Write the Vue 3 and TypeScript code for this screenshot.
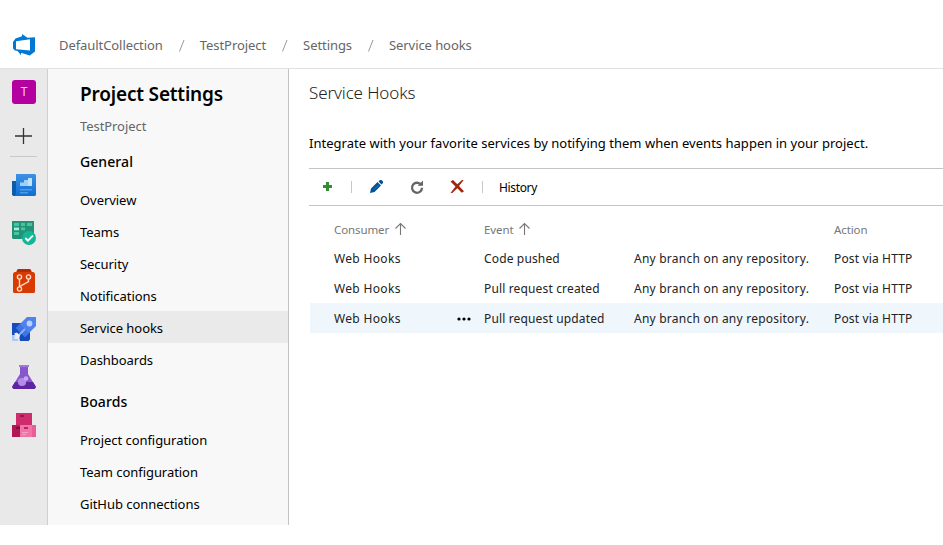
<script setup lang="ts">
interface Subscription {
  consumer: string
  event: string
  detail: string
  action: string
  selected?: boolean
}

const crumbs: string[] = ['DefaultCollection', 'TestProject', 'Settings', 'Service hooks']

const groups: { title: string; items: string[] }[] = [
  {
    title: 'General',
    items: ['Overview', 'Teams', 'Security', 'Notifications', 'Service hooks', 'Dashboards'],
  },
  {
    title: 'Boards',
    items: ['Project configuration', 'Team configuration', 'GitHub connections'],
  },
]
const active = 'Service hooks'

const rows: Subscription[] = [
  { consumer: 'Web Hooks', event: 'Code pushed', detail: 'Any branch on any repository.', action: 'Post via HTTP' },
  { consumer: 'Web Hooks', event: 'Pull request created', detail: 'Any branch on any repository.', action: 'Post via HTTP' },
  { consumer: 'Web Hooks', event: 'Pull request updated', detail: 'Any branch on any repository.', action: 'Post via HTTP', selected: true },
]
</script>

<template>
  <div class="page">
    <header class="top">
      <svg class="logo" width="24" height="24" viewBox="0 0 24 24">
        <path fill="#0078d4" fill-rule="evenodd" d="M1 9 3.500 5.600 10 3.300V1l5.400 3.800L23 4.300v14.200L17.800 22.400 9 19.700v2.600L5.600 18 3 17.400 1 15.600ZM4 8.200v8.100l14 1.200V6.200Z" />
      </svg>
      <nav class="crumbs">
        <template v-for="(c, i) in crumbs" :key="c">
          <svg v-if="i" class="slash" width="37" height="20" viewBox="0 0 37 20"><path d="M16.500 16.500 21 5" stroke="#999" fill="none" /></svg>
          <span class="crumb">{{ c }}</span>
        </template>
      </nav>
    </header>

    <div class="body">
      <aside class="rail">
        <div class="tile">T</div>
        <svg class="plus" width="18" height="18" viewBox="0 0 18 18">
          <path d="M1 9h17M9.500 1v16" stroke="#333" stroke-width="1.300" fill="none" />
        </svg>
        <div class="divider"></div>

        <svg class="app" width="24" height="24" viewBox="0 0 24 24">
          <defs>
            <linearGradient id="ov" x1="0" y1="0" x2="0" y2="1"><stop offset="0" stop-color="#3c91e5" /><stop offset="1" stop-color="#0f6fd2" /></linearGradient>
          </defs>
          <path d="M0 8h5v15H1.200L0 21.800Z" fill="#0b5cab" />
          <path d="M4 1h19l1 1v20l-1 1H2.500Q4 22.500 4 20Z" fill="url(#ov)" />
          <path d="M8 13V9.500h4V7h4V5h4v8Z" fill="#9fd0fb" />
          <path d="M16 5h4v8h-4Z" fill="#c1e2ff" />
          <path d="M8 16h12v1.500H8ZM8 19h8v1.500H8Z" fill="#4b9ae4" />
        </svg>

        <svg class="app" width="24" height="24" viewBox="0 0 24 24">
          <path d="M0 0h22v18H1l-1-1Z" fill="#259277" />
          <path d="M2 2h5v3H2ZM9 2h4v3H9ZM15 2h5v3h-5Z" fill="#42c7a0" />
          <path d="M2 6.500h5v2.800H2Z" fill="#9af2dc" />
          <path d="M9 6.500h4v2.800H9ZM2 11h5v3H2Z" fill="#42c7a0" />
          <circle cx="17" cy="17" r="7" fill="#12b795" />
          <path d="m13.300 17 2.600 2.600 5-5" fill="none" stroke="#fff" stroke-width="1.900" />
        </svg>

        <svg class="app" width="24" height="24" viewBox="0 0 24 24">
          <path d="M5 1 6 0h12l1 1 1.500 4h-17Z" fill="#b52b08" />
          <path d="M1 4.500 2.500 3h19L23 4.500V23l-1 1H2l-1-1Z" fill="#d83b01" />
          <g fill="none" stroke="#ffd5c5" stroke-width="1.400">
            <circle cx="7.500" cy="8" r="2.100" /><circle cx="16.500" cy="8" r="2.100" /><circle cx="7.500" cy="20" r="2.100" />
            <path d="M7.500 10v8M16.500 10v2.500L8 17.300" />
          </g>
        </svg>

        <svg class="app" width="24" height="24" viewBox="0 0 24 24">
          <path d="M0 6h10v12H0ZM6 14h12v8.500L16.500 24H8Z" fill="#174dbb" />
          <path d="M15 0h9v9L13 20 4 11Z" fill="#4f82ee" />
          <path d="M4 11 8 7l9 9-4 4Z" fill="#3f74e6" />
          <circle cx="17.500" cy="6.500" r="2.900" fill="#b8d2ff" />
          <path d="m6.500 18.500 6.500-6.500" stroke="#8db4fa" stroke-width="1.800" />
          <path d="m2 16.500 3-1 3 3-1 3-2-1Z" fill="#e4efff" />
          <path d="M0 18h2.500v4H6v2H0Z" fill="#a8c9ff" />
        </svg>

        <svg class="app" width="24" height="24" viewBox="0 0 24 24">
          <path d="M8 1h8v8l8 13-1.500 2h-21L0 22 8 9Z" fill="#8757cb" />
          <path d="M7 0h10v2H7Z" fill="#a279dd" />
          <path d="M3 17h18l3 5-1.500 2h-21L0 22Z" fill="#5d269f" />
          <circle cx="10" cy="17" r="4.100" fill="#b58be8" />
          <circle cx="14" cy="13.500" r="2.300" fill="#c8a7f4" />
        </svg>

        <svg class="app" width="24" height="24" viewBox="0 0 24 24">
          <path d="M4 0h16v12H4Z" fill="#ce2c6d" />
          <path d="M8 2h4v2H8Z" fill="#9d154c" />
          <path d="M0 12h9v12H0Z" fill="#b21753" />
          <path d="M4 14h4v2H4Z" fill="#7d0d38" />
          <path d="M8 12h16v12H8Z" fill="#ef74a7" />
          <path d="M20 12h4v12h-4Z" fill="#e85f98" />
          <path d="M12 14h4v2h-4Z" fill="#be235f" />
          <path d="M10 19.500h6M10 21.500h4" stroke="#f7a0c4" />
        </svg>
      </aside>

      <aside class="side">
        <h1>Project Settings</h1>
        <div class="project">TestProject</div>
        <section v-for="g in groups" :key="g.title" class="group">
          <h2>{{ g.title }}</h2>
          <div v-for="i in g.items" :key="i" class="item" :class="{ active: i === active }">{{ i }}</div>
        </section>
      </aside>

      <main class="main">
        <h3>Service Hooks</h3>
        <p>Integrate with your favorite services by notifying them when events happen in your project.</p>
        <div class="toolbar">
          <svg class="tool add" width="16" height="16" viewBox="0 0 16 16"><path d="M7 3h3v3h3v3h-3v3H7V9H4V6h3Z" fill="#388a34" /></svg>
          <i class="sep"></i>
          <svg class="tool edit" width="16" height="16" viewBox="0 0 16 16"><path d="m1 14 1-4.500L8.500 3 12 6.500 5.500 13Zm8.500-11.500L11 1h1.500L14 2.500V4l-1.500 1.500Z" fill="#00539c" /><path d="m5 10.500 4.500-4.500" stroke="#5591c4" stroke-width=".6" /></svg>
          <svg class="tool refresh" width="16" height="16" viewBox="0 0 16 16"><path d="M12.300 6.200A5 5 0 1 0 13 8.800" fill="none" stroke="#656565" stroke-width="2.300" /><path d="M8.700 6.800H14V1.600Z" fill="#656565" /></svg>
          <svg class="tool remove" width="16" height="16" viewBox="0 0 16 16"><path d="M1.500 2.500 4 1l4.300 4.300L13 1h1.700L10 7l5 5.200-2.200 1.600L8.300 9.200 3.300 14H1.500l5-6.500Z" fill="#a1260d" /></svg>
          <i class="sep second"></i>
          <span class="history">History</span>
        </div>

        <div class="grid">
          <div class="row head">
            <span>Consumer<svg class="arrow" width="12" height="14" viewBox="0 0 12 14"><path d="M6.500 13V1.500M1.500 6.500l5-5 5 5" fill="none" stroke="#777" stroke-width="1.100" /></svg></span>
            <span></span>
            <span>Event<svg class="arrow" width="12" height="14" viewBox="0 0 12 14"><path d="M6.500 13V1.500M1.500 6.500l5-5 5 5" fill="none" stroke="#777" stroke-width="1.100" /></svg></span>
            <span></span>
            <span>Action</span>
          </div>
          <div v-for="r in rows" :key="r.event" class="row" :class="{ selected: r.selected }">
            <span class="consumer">{{ r.consumer }}</span>
            <span class="more"><svg v-if="r.selected" width="14" height="4" viewBox="0 0 14 4"><circle cx="2" cy="2" r="1.600" /><circle cx="7" cy="2" r="1.600" /><circle cx="12" cy="2" r="1.600" /></svg></span>
            <span>{{ r.event }}</span>
            <span class="detail">{{ r.detail }}</span>
            <span class="action">{{ r.action }}</span>
          </div>
        </div>
      </main>
    </div>
  </div>
</template>

<style>
body {
  background: #fff;
  overflow: hidden;
}
</style>

<style scoped>
.page {
  width: 943px;
  height: 545px;
  overflow: hidden;
  background: #fff;
  color: #000;
  font: 13px/20px 'Noto Sans', 'Open Sans', sans-serif;
  white-space: nowrap;
}
.top {
  box-sizing: border-box;
  height: 69px;
  padding: 22px 0 0 12px;
  display: flex;
  align-items: center;
  border-bottom: 1px solid #e1e1e1;
}
.logo {
  flex: none;
}
.crumbs {
  display: flex;
  margin-left: 23px;
  color: #666;
  letter-spacing: -0.07px;
}
.slash {
  flex: none;
}
.body {
  display: flex;
  height: 456px;
}
.rail {
  box-sizing: border-box;
  width: 48px;
  flex: none;
  padding-top: 11px;
  display: flex;
  flex-direction: column;
  align-items: center;
  background: #e9e9e9;
  border-right: 1px solid #cfcfcf;
}
.tile {
  width: 24px;
  height: 24px;
  border-radius: 3px;
  background: #b4009e;
  color: #f4c6ee;
  font-size: 12px;
  line-height: 24px;
  text-align: center;
  margin-left: 1px;
}
.plus {
  margin: 23px 1px 0 0;
}
.divider {
  width: 27px;
  height: 1px;
  background: #c8c8c8;
  margin: 11px 0 16px;
}
.app {
  flex: none;
  margin: 0 0 24px 1px;
}
.side {
  box-sizing: border-box;
  width: 241px;
  flex: none;
  overflow: hidden;
  background: #f8f8f8;
  border-right: 1px solid #c3c3c3;
}
h1, h2, h3, p {
  margin: 0;
}
h1 {
  padding: 11px 0 0 32px;
  font-size: 19px;
  line-height: 28px;
  font-weight: 600;
  letter-spacing: -0.17px;
}
.project {
  padding: 8px 0 0 32px;
  color: #666;
  letter-spacing: -0.07px;
}
.group {
  padding-bottom: 1px;
}
h2 {
  height: 47px;
  padding-left: 32px;
  font-size: 14px;
  line-height: 51px;
  font-weight: 500;
  letter-spacing: 0.08px;
}
.item {
  height: 32px;
  padding-left: 32px;
  line-height: 35px;
  letter-spacing: -0.05px;
}
.item.active {
  background: #eaeaea;
}
.main {
  flex: 1;
  min-width: 0;
  padding-left: 20px;
}
h3 {
  padding-top: 12px;
  font-size: 17px;
  line-height: 24px;
  font-weight: 300;
  color: #222;
  letter-spacing: -0.13px;
}
p {
  padding-top: 28px;
  line-height: 20px;
  letter-spacing: 0.02px;
}
.toolbar {
  box-sizing: border-box;
  height: 38px;
  margin-top: 15px;
  padding-left: 10px;
  display: flex;
  align-items: center;
  border: solid #c4c4c4;
  border-width: 1px 0;
}
.tool {
  flex: none;
}
.sep {
  width: 1px;
  height: 12px;
  margin-left: 16px;
  background: #c8c8c8;
}
.edit {
  margin-left: 17px;
}
.refresh, .remove {
  margin-left: 24px;
}
.sep.second {
  margin-left: 17px;
}
.history {
  margin-left: 16px;
  padding-top: 2px;
  font-size: 12px;
  letter-spacing: -0.35px;
}
.grid {
  padding: 10px 0 0 1px;
}
.row {
  height: 30px;
  padding-left: 24px;
  display: grid;
  grid-template-columns: 120px 30px 150px 200px 1fr;
  align-items: center;
  font-size: 12px;
  line-height: 22px;
  letter-spacing: 0.15px;
  color: #222;
}
.row > span {
  padding-top: 2px;
}
.row .consumer {
  letter-spacing: 0.33px;
}
.row .detail {
  letter-spacing: 0.23px;
}
.row.head {
  height: 27px;
  color: #777;
  font-size: 11.5px;
  letter-spacing: -0.1px;
}
.row.head > span {
  padding-top: 0;
}
.row.selected {
  background: #eff6fc;
}
.arrow {
  margin-left: 5px;
  vertical-align: -2px;
}
.row .more {
  display: flex;
  padding: 1px 0 0 3px;
}
</style>
